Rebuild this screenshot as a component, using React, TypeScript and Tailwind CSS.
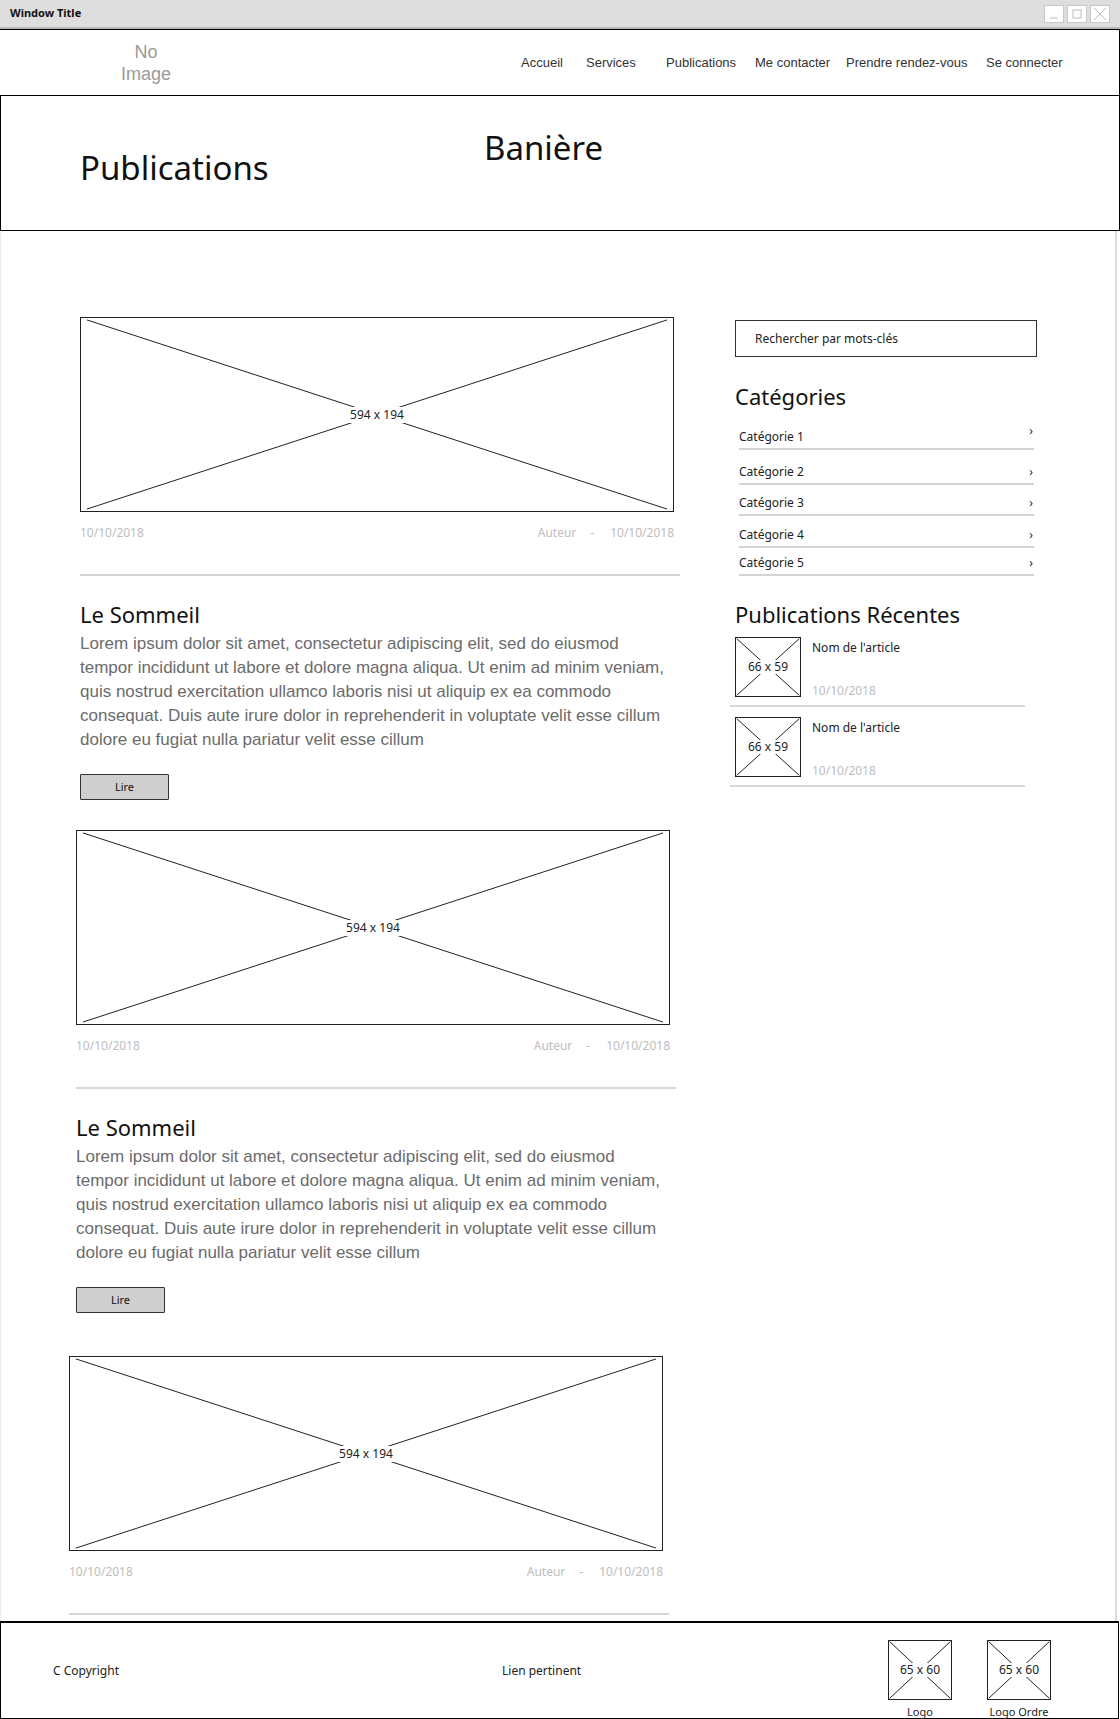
import React from "react";

const hand = "font-['Noto_Sans',sans-serif]";
const arial = "font-['Liberation_Sans',Arial,sans-serif]";

function Placeholder({ size, label, labelCls }: { size: string; label: string; labelCls: string }) {
  return (
    <div className={`relative shrink-0 border border-[#222] bg-white ${size}`}>
      <svg className="absolute inset-0 h-full w-full" viewBox="0 0 100 100" preserveAspectRatio="none">
        <line x1="1" y1="1" x2="99" y2="99" stroke="#222" strokeWidth="1" vectorEffect="non-scaling-stroke" />
        <line x1="99" y1="1" x2="1" y2="99" stroke="#222" strokeWidth="1" vectorEffect="non-scaling-stroke" />
      </svg>
      <div className="absolute inset-0 flex items-center justify-center">
        <span className={`${hand} bg-white text-[#222] ${labelCls}`}>{label}</span>
      </div>
    </div>
  );
}

const lorem = [
  "Lorem ipsum dolor sit amet, consectetur adipiscing elit, sed do eiusmod",
  "tempor incididunt ut labore et dolore magna aliqua. Ut enim ad minim veniam,",
  "quis nostrud exercitation ullamco laboris nisi ut aliquip ex ea commodo",
  "consequat. Duis aute irure dolor in reprehenderit in voluptate velit esse cillum",
  "dolore eu fugiat nulla pariatur velit esse cillum",
];

function Article({ cls, full }: { cls: string; full: boolean }) {
  return (
    <div className={`flex w-[600px] flex-col ${cls}`}>
      <Placeholder size="w-[594px] h-[195px]" label="594 x 194" labelCls="text-[12px] leading-[16px] px-[5px]" />
      <div className={`${hand} mt-[13px] flex w-[594px] items-center justify-between text-[12px] leading-[16px] text-[#bdbdbd]`}>
        <span>10/10/2018</span>
        <span className="flex items-center">
          <span>Auteur</span>
          <span className="ml-[14px]">-</span>
          <span className="ml-[16px]">10/10/2018</span>
        </span>
      </div>
      <div className="mt-[33px] h-[2px] w-[600px] bg-[#d6d6d6]" />
      {full && (
        <>
          <h2 className={`${hand} mt-[27px] text-[22px] leading-none text-[#111]`}>Le Sommeil</h2>
          <div className={`${arial} mt-[7px] text-[17px] leading-[24px] text-[#6b6b6b]`}>
            {lorem.map((l) => (
              <div key={l} className="whitespace-nowrap">{l}</div>
            ))}
          </div>
          <button
            className={`${hand} mt-[22px] flex h-[26px] w-[89px] items-center justify-center rounded-[1px] border border-[#333] bg-[#cfcfcf] text-[11px] text-[#111]`}
          >
            Lire
          </button>
        </>
      )}
    </div>
  );
}

const cats = [
  { name: "Catégorie 1", h: "h-[32px]", first: true },
  { name: "Catégorie 2", h: "h-[35px]", first: false },
  { name: "Catégorie 3", h: "h-[31px]", first: false },
  { name: "Catégorie 4", h: "h-[32px]", first: false },
  { name: "Catégorie 5", h: "h-[28px]", first: false },
];

function Recent({ cls }: { cls: string }) {
  return (
    <div className={`flex flex-col ${cls}`}>
      <div className="flex">
        <Placeholder size="w-[66px] h-[60px]" label="66 x 59" labelCls="text-[12px] leading-[14px] px-[1px]" />
        <div className={`${hand} ml-[11px] flex h-[60px] flex-col justify-between pt-[3px] text-[12px] leading-[16px]`}>
          <span className="text-[#222]">Nom de l'article</span>
          <span className="-mb-[2px] text-[#bdbdbd]">10/10/2018</span>
        </div>
      </div>
      <div className="-ml-[5px] mt-[8px] h-[2px] w-[295px] bg-[#d6d6d6]" />
    </div>
  );
}

function WinBtn({ children }: { children: React.ReactNode }) {
  return (
    <div className="flex h-[18px] w-[20px] items-center justify-center border border-[#c8c8c8] bg-white">
      <svg width="14" height="14" viewBox="0 0 14 14">{children}</svg>
    </div>
  );
}

export default function App() {
  const links = [
    { t: "Accueil", w: "w-[65px]" },
    { t: "Services", w: "w-[80px]" },
    { t: "Publications", w: "w-[89px]" },
    { t: "Me contacter", w: "w-[91px]" },
    { t: "Prendre rendez-vous", w: "w-[140px]" },
    { t: "Se connecter", w: "w-[100px]" },
  ];
  return (
    <div className="relative h-[1719px] w-[1120px] overflow-hidden bg-white">
      {/* Title bar */}
      <div className="flex h-[29px] items-center justify-between border-b-2 border-[#b8b8b8] bg-[#dedede] pl-[10px] pr-[10px]">
        <span className={`${hand} text-[11px] font-bold text-[#111]`}>Window Title</span>
        <div className="flex gap-[3px]">
          <WinBtn>
            <line x1="3" y1="11" x2="11" y2="11" stroke="#bbb" strokeWidth="1" />
          </WinBtn>
          <WinBtn>
            <rect x="3" y="3" width="8" height="8" fill="none" stroke="#bbb" strokeWidth="1" />
          </WinBtn>
          <WinBtn>
            <line x1="1" y1="1" x2="13" y2="13" stroke="#bbb" strokeWidth="1" />
            <line x1="13" y1="1" x2="1" y2="13" stroke="#bbb" strokeWidth="1" />
          </WinBtn>
        </div>
      </div>

      {/* Nav */}
      <div className="flex h-[67px] w-[1120px] items-center border-y border-r border-black">
        <div className={`${arial} ml-[96px] w-[100px] text-center text-[18px] leading-[22px] text-[#9a9a9a]`}>
          No
          <br />
          Image
        </div>
        <nav className={`${arial} ml-[325px] flex text-[13px] text-[#333]`}>
          {links.map((l) => (
            <span key={l.t} className={`${l.w} whitespace-nowrap`}>
              {l.t}
            </span>
          ))}
        </nav>
      </div>

      {/* Banner */}
      <div className="flex h-[135px] w-[1120px] items-start border-x border-b border-black">
        <div className="w-[483px] pl-[79px] pt-[55px]">
          <h1 className={`${hand} text-[33px] leading-none text-[#111]`}>Publications</h1>
        </div>
        <div className="pt-[35px]">
          <div className={`${hand} text-[33px] leading-none text-[#111]`}>Banière</div>
        </div>
      </div>

      {/* Main */}
      <div className="flex h-[1390px] w-[1117px] overflow-hidden border-l border-r-2 border-l-[#ececec] border-r-[#dcdcdc]">
        <div className="flex w-[699px] flex-col">
          <Article cls="ml-[79px] mt-[86px]" full />
          <Article cls="ml-[75px] mt-[30px]" full />
          <Article cls="ml-[68px] mt-[43px]" full={false} />
        </div>

        <aside className="ml-[35px] flex w-[302px] flex-col">
          <div className={`${hand} mt-[89px] flex h-[37px] items-center border border-[#333] pl-[19px] text-[12px] text-[#222]`}>
            Rechercher par mots-clés
          </div>
          <h3 className={`${hand} mt-[28px] text-[22px] leading-none text-[#111]`}>Catégories</h3>
          <div className="ml-[4px] mt-[11px] flex w-[295px] flex-col">
            {cats.map((c) => (
              <div
                key={c.name}
                className={`${hand} flex ${c.h} items-end justify-between border-b-2 border-[#d4d4d4] pb-[3px] text-[12px] leading-[16px] text-[#222]`}
              >
                <span>{c.name}</span>
                <span className={`pr-[1px] text-[12px] ${c.first ? "mb-[6px]" : ""}`}>›</span>
              </div>
            ))}
          </div>
          <h3 className={`${hand} mt-[27px] whitespace-nowrap text-[22px] leading-none text-[#111]`}>
            Publications Récentes
          </h3>
          <Recent cls="mt-[12px]" />
          <Recent cls="mt-[10px]" />
        </aside>
      </div>

      {/* Footer */}
      <footer className="flex h-[98px] w-[1119px] items-center border-x border-b border-t-2 border-black">
        <div className={`${hand} w-[501px] pl-[52px] text-[12px] text-[#222]`}>C Copyright</div>
        <div className={`${hand} w-[386px] text-[12px] text-[#222]`}>Lien pertinent</div>
        <div className="flex h-full items-start gap-[35px] pt-[17px]">
          <div className="flex w-[64px] flex-col items-center">
            <Placeholder size="w-[64px] h-[60px]" label="65 x 60" labelCls="text-[12px] leading-[14px] px-[1px]" />
            <span className={`${hand} mt-[5px] whitespace-nowrap text-[11px] leading-[14px] text-[#222]`}>Logo</span>
          </div>
          <div className="flex w-[64px] flex-col items-center">
            <Placeholder size="w-[64px] h-[60px]" label="65 x 60" labelCls="text-[12px] leading-[14px] px-[1px]" />
            <span className={`${hand} mt-[5px] whitespace-nowrap text-[11px] leading-[14px] text-[#222]`}>Logo Ordre</span>
          </div>
        </div>
      </footer>
    </div>
  );
}
